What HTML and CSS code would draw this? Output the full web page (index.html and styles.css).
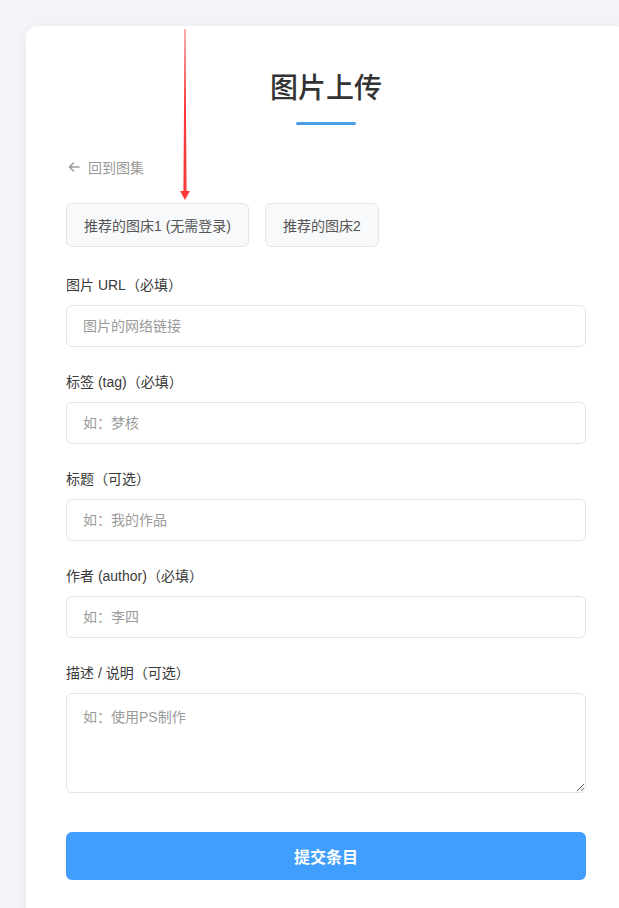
FILE: index.html
```html
<!DOCTYPE html>
<html lang="zh">
<head>
<meta charset="utf-8">
<title>图片上传</title>
<link rel="stylesheet" href="styles.css">
</head>
<body>
<div class="card">
  <h1 class="title">图片上传</h1>
  <div class="title-bar"></div>
  <a class="back" href="#">
    <svg class="back-icon" width="12" height="12" viewBox="0 0 12 12"><path d="M11 6H1.5M5.5 2L1.5 6L5.5 10" fill="none" stroke="#9a9ca3" stroke-width="1.6" stroke-linecap="round" stroke-linejoin="round"/></svg>
    <span>回到图集</span>
  </a>
  <div class="hosts">
    <button class="host-btn">推荐的图床1 (无需登录)</button>
    <button class="host-btn">推荐的图床2</button>
  </div>
  <form class="form">
    <div class="group">
      <label class="label">图片 URL（必填）</label>
      <input class="input" type="text" placeholder="图片的网络链接">
    </div>
    <div class="group">
      <label class="label">标签 (tag)（必填）</label>
      <input class="input" type="text" placeholder="如：梦核">
    </div>
    <div class="group">
      <label class="label">标题（可选）</label>
      <input class="input" type="text" placeholder="如：我的作品">
    </div>
    <div class="group">
      <label class="label">作者 (author)（必填）</label>
      <input class="input" type="text" placeholder="如：李四">
    </div>
    <div class="group">
      <label class="label">描述 / 说明（可选）</label>
      <textarea class="textarea" placeholder="如：使用PS制作"></textarea>
    </div>
    <button class="submit" type="button">提交条目</button>
  </form>
</div>
<svg class="annot-arrow" width="14" height="175" viewBox="0 0 14 175">
  <polygon points="6.6,0 7.4,0 8.6,163 5.4,163" fill="#ff3a3a"/>
  <polygon points="2,162 12,162 7,171" fill="#ff3a3a"/>
</svg>
</body>
</html>
```

FILE: styles.css
```css
* { box-sizing: border-box; }
html, body { margin: 0; padding: 0; }
body {
  background: #f3f4f7;
  font-family: "Liberation Sans", "Noto Sans CJK SC", sans-serif;
  color: #333;
  overflow: hidden;
  height: 908px;
  position: relative;
}
.card {
  margin: 26px 0 0 26px;
  width: 600px;
  background: #fff;
  border-radius: 12px;
  box-shadow: 0 2px 12px rgba(0, 0, 0, 0.05);
  padding: 43px 40px 40px;
  min-height: 900px;
}
.title {
  margin: 0;
  text-align: center;
  font-size: 28px;
  line-height: 40px;
  font-weight: 500;
  color: #333;
}
.title-bar {
  width: 60px;
  height: 3px;
  background: #4a9ee8;
  border-radius: 2px;
  margin: 13px auto 0;
}
.back {
  display: flex;
  align-items: center;
  gap: 8px;
  margin-top: 32px;
  height: 20px;
  font-size: 14px;
  color: #999;
  text-decoration: none;
  width: max-content;
  padding-left: 2px;
}
.hosts {
  display: flex;
  gap: 16px;
  margin-top: 26px;
}
.host-btn {
  height: 44px;
  padding: 0 17px;
  background: #f8f9fb;
  border: 1px solid #e3e6eb;
  border-radius: 6px;
  font-family: inherit;
  font-size: 14px;
  color: #555;
}
.form {
  margin-top: 28px;
  display: flex;
  flex-direction: column;
}
.group {
  display: flex;
  flex-direction: column;
  gap: 10px;
  margin-bottom: 25px;
}
.label {
  font-size: 14px;
  line-height: 20px;
  color: #3a3a3a;
}
.input, .textarea {
  width: 100%;
  border: 1px solid #e2e4e9;
  border-radius: 6px;
  font-family: inherit;
  font-size: 14px;
  color: #333;
  padding: 0 16px;
  background: #fff;
  outline: none;
}
.input { height: 42px; }
.textarea {
  height: 100px;
  padding: 12px 16px;
  resize: vertical;
  display: block;
}
.input::placeholder, .textarea::placeholder { color: #9a9a9a; }
.submit {
  margin-top: 14px;
  height: 48px;
  background: #409eff;
  color: #fff;
  border: none;
  border-radius: 6px;
  font-family: inherit;
  font-size: 16px;
  font-weight: 700;
}
.annot-arrow {
  position: absolute;
  left: 178px;
  top: 29px;
}
```
